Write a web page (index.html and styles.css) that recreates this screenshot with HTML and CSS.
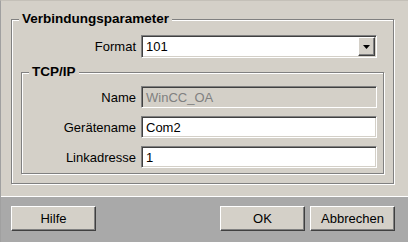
FILE: index.html
```html
<!DOCTYPE html>
<html lang="de">
<head>
  <meta charset="UTF-8" />
  <title>Verbindungsparameter</title>
  <link rel="stylesheet" href="styles.css">
</head>
<body>
  <div class="dialog">
    <div class="main">
      <div class="group outer">
        <span class="group-title">Verbindungsparameter</span>
        <div class="row">
          <label class="label">Format</label>
          <div class="field combo">
            <span class="value">101</span>
            <span class="drop-btn">
              <svg width="7" height="4" viewBox="0 0 7 4"><polygon points="0,0 7,0 3.5,4" fill="#000"/></svg>
            </span>
          </div>
        </div>
        <div class="group inner">
          <span class="group-title">TCP/IP</span>
          <div class="row">
            <label class="label">Name</label>
            <div class="field disabled"><span class="value">WinCC_OA</span></div>
          </div>
          <div class="row">
            <label class="label">Gerätename</label>
            <div class="field"><span class="value">Com2</span></div>
          </div>
          <div class="row">
            <label class="label">Linkadresse</label>
            <div class="field"><span class="value">1</span></div>
          </div>
        </div>
      </div>
    </div>
    <div class="footer">
      <button class="btn">Hilfe</button>
      <div class="spacer"></div>
      <button class="btn">OK</button>
      <button class="btn">Abbrechen</button>
    </div>
  </div>
</body>
</html>
```

FILE: styles.css
```css
body {
  margin: 0;
  font-family: "Liberation Sans", Arial, sans-serif;
  font-size: 13px;
  color: #000;
  background: #d4d0c8;
}
.dialog {
  width: 408px;
  height: 242px;
  box-sizing: border-box;
  display: flex;
  flex-direction: column;
  background: #d4d0c8;
  border-left: 1px solid #a0a0a0;
  border-top: 1px solid #c4c0b8;
}
.main {
  height: 195px;
  box-sizing: border-box;
  padding: 18px 14px 0 10px;
}

/* etched group box */
.group {
  position: relative;
  border: 1px solid #808080;
  box-shadow: 1px 1px 0 #fff, inset 1px 1px 0 #fff;
}
.group.outer {
  height: 165px;
  box-sizing: border-box;
  padding: 15px 9px 9px 9px;
}
.group.inner {
  height: 102px;
  box-sizing: border-box;
  margin-top: 14px;
  padding: 13px 0 0 0;
}
.group-title {
  position: absolute;
  top: -9px;
  left: 7px;
  padding: 0 3px;
  line-height: 16px;
  font-size: 13.5px;
  font-weight: bold;
  background: #d4d0c8;
}
.row {
  display: flex;
  align-items: center;
  gap: 5px;
}
.inner .row + .row {
  margin-top: 8px;
}
.label {
  width: 115px;
  text-align: right;
}
.inner .label {
  width: 114px;
}

/* sunken fields */
.field {
  width: 236px;
  height: 22px;
  box-sizing: border-box;
  display: flex;
  align-items: center;
  padding: 0 3px;
  background: #fff;
  border: 1px solid;
  border-color: #808080 #fff #fff #808080;
  box-shadow: inset 1px 1px 0 #404040, inset -1px -1px 0 #d4d0c8;
}
.field .value {
  flex: 1;
  padding-left: 1px;
}
.field.disabled {
  background: #d4d0c8;
  color: #808080;
}
.combo {
  height: 23px;
  padding: 1px 1px 1px 3px;
}
.drop-btn {
  width: 17px;
  height: 100%;
  box-sizing: border-box;
  display: flex;
  align-items: center;
  justify-content: center;
  background: #d4d0c8;
  border: 1px solid;
  border-color: #fff #404040 #404040 #fff;
  box-shadow: inset -1px -1px 0 #808080;
}

/* button bar */
.footer {
  flex: 1;
  display: flex;
  align-items: flex-start;
  gap: 5px;
  padding: 9px 13px 0 10px;
  background: #a9a9a9;
  border-top: 1px solid #fff;
}
.spacer {
  flex: 1;
}
.btn {
  width: 85px;
  height: 25px;
  font-family: "Liberation Sans", Arial, sans-serif;
  font-size: 13px;
  color: #000;
  background: #d4d0c8;
  border: 1px solid;
  border-color: #fff #404040 #404040 #fff;
  box-shadow: inset -1px -1px 0 #808080;
  padding: 0;
}
```
